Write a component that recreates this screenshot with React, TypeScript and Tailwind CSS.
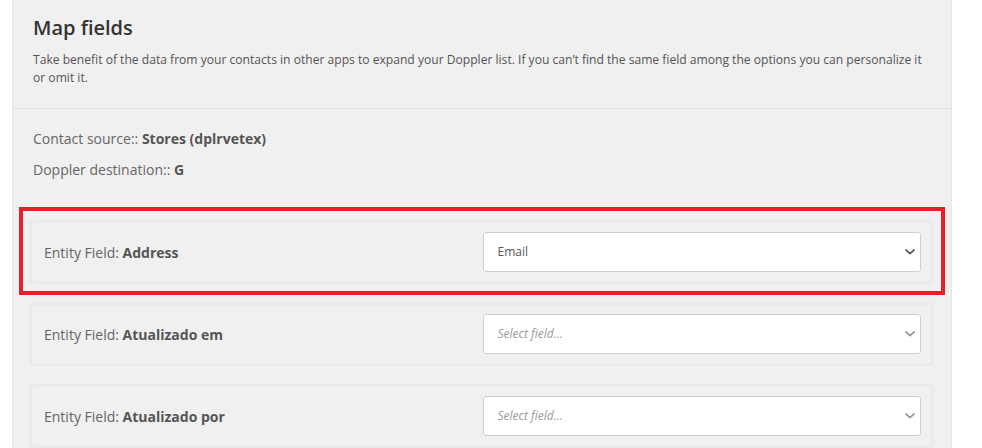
import React from "react";

const font = { fontFamily: "'Open Sans', Lato, sans-serif" };

function Chevron({ dark }: { dark: boolean }) {
  return (
    <svg width="10" height="6" viewBox="0 0 10 6" className="shrink-0">
      <path
        d="M1 1 L5 4.6 L9 1"
        fill="none"
        stroke={dark ? "#5a5a5a" : "#999999"}
        strokeWidth="1.7"
        strokeLinecap="round"
        strokeLinejoin="round"
      />
    </svg>
  );
}

function Row({ label, value }: { label: string; value?: string }) {
  return (
    <div className="rounded-[4px] border-[3px] border-[#eaeaea] pl-[12px] pr-[10px] py-[9px] grid grid-cols-2 items-center">
      <div className="text-[14px] text-[#666666]">
        Entity Field: <span className="font-bold text-[#555555]">{label}</span>
      </div>
      <div className="h-[40px] bg-white border border-[#cfcfcf] rounded-[3px] flex items-center justify-between pl-[14px] pr-[5px]">
        {value ? (
          <span className="text-[12px] text-[#555555]">{value}</span>
        ) : (
          <span className="text-[12px] italic text-[#999999]">Select field...</span>
        )}
        <Chevron dark={!!value} />
      </div>
    </div>
  );
}

export default function App() {
  return (
    <div className="w-[982px] h-[448px] bg-white overflow-hidden relative" style={font}>
      <div className="ml-[12px] w-[940px] h-[448px] bg-[#f0f0f0] border-x border-[#e6e6e6]">
        <div className="px-[20px] pt-[14px] pb-[21px] border-b border-[#e2e2e2]">
          <h1 className="text-[20px] leading-[28px] font-semibold text-[#333333]">Map fields</h1>
          <p className="mt-[9px] text-[12.1px] leading-[18px] text-[#555555]">
            Take benefit of the data from your contacts in other apps to expand your Doppler list. If you can’t find the same field among the options you can personalize it
            <br />
            or omit it.
          </p>
        </div>
        <div className="px-[20px] pt-[20px]">
          <div className="text-[14px] leading-[20px] text-[#666666]">
            Contact source:: <span className="font-bold text-[#555555]">Stores (dplrvetex)</span>
          </div>
          <div className="mt-[11px] text-[14px] leading-[20px] text-[#666666]">
            Doppler destination:: <span className="font-bold text-[#555555]">G</span>
          </div>
        </div>
        <div className="mt-[40px] pl-[16px] pr-[17px] flex flex-col gap-[18px]">
          <Row label="Address" value="Email" />
          <Row label="Atualizado em" />
          <Row label="Atualizado por" />
        </div>
      </div>
      <div className="absolute left-[19px] top-[207px] w-[926px] h-[88px] border-[4px] border-[#e4202a] pointer-events-none" />
    </div>
  );
}
